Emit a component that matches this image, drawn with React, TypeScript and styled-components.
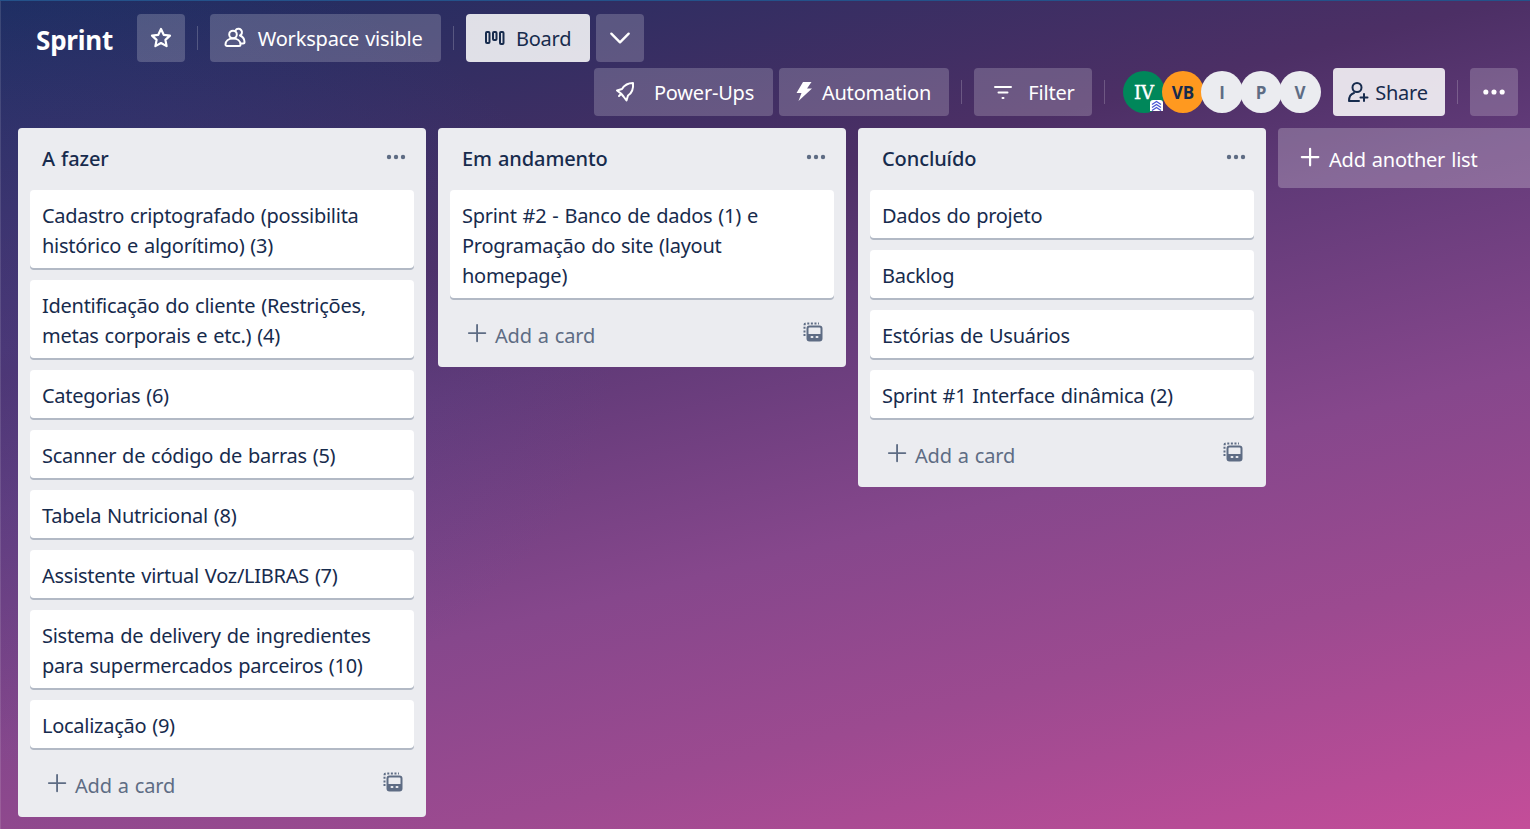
import styled, { createGlobalStyle } from "styled-components";
import type { ReactNode } from "react";

const GlobalStyle = createGlobalStyle`
  html, body {
    margin: 0;
    height: 100%;
    overflow: hidden;
  }

  body {
    font-family: "Noto Sans", "Open Sans", sans-serif;
    color: #172b4d;
  }
`;

const Page = styled.div`
  box-sizing: border-box;
  width: 1530px;
  height: 829px;
  overflow: hidden;
  border-top: 1px solid #24528a;
  box-shadow: inset 1px 0 0 rgba(255, 255, 255, 0.12);
  background:
    radial-gradient(ellipse 620px 420px at 0 42%, rgba(80, 84, 180, 0.24), transparent),
    linear-gradient(166deg, #1c2d60 0%, #4c2f65 31%, #613a78 42%, #86478c 62%, #9c4a90 78%, #c44d99 100%);
`;

const Header = styled.header`
  display: flex;
  flex-direction: column;
  gap: 6px;
  padding: 13px 12px 0 36px;
`;

const HeaderRow = styled.div<{ $end?: boolean }>`
  display: flex;
  align-items: center;
  height: 48px;
  justify-content: ${(p) => (p.$end ? "flex-end" : "flex-start")};
`;

const BoardTitle = styled.h1`
  margin: 3px 24px 0 0;
  font-size: 26px;
  font-weight: 700;
  color: #fff;
  letter-spacing: -0.2px;
`;

const HeaderButton = styled.button<{
  $light?: boolean;
  $width: number;
  $gap?: number;
  $first?: boolean;
  $trim?: number;
}>`
  display: flex;
  flex: none;
  align-items: center;
  justify-content: center;
  gap: ${(p) => p.$gap ?? 10}px;
  box-sizing: border-box;
  width: ${(p) => p.$width}px;
  height: 48px;
  margin-left: ${(p) => (p.$first ? 0 : 6)}px;
  padding: 0 ${(p) => p.$trim ?? 0}px 0 0;
  border: 0;
  border-radius: 4px;
  font-family: inherit;
  font-size: 20px;
  letter-spacing: -0.2px;
  word-spacing: 1px;
  color: ${(p) => (p.$light ? "#172b4d" : "#fff")};
  background: ${(p) => (p.$light ? "rgba(255, 255, 255, 0.85)" : "rgba(255, 255, 255, 0.2)")};
  svg {
    flex: none;
  }
`;

const ButtonLabel = styled.span`
  padding-top: 1px;
`;

const AddListLabel = styled.span`
  padding-top: 3px;
`;

const Separator = styled.span`
  flex: none;
  width: 1px;
  height: 24px;
  margin: 0 6px 0 12px;
  background: rgba(255, 255, 255, 0.2);
`;

const Avatars = styled.div`
  display: flex;
  margin: 0 6px 0 12px;
`;

const Avatar = styled.div<{ $bg: string; $color: string; $serif?: boolean }>`
  position: relative;
  display: flex;
  align-items: center;
  justify-content: center;
  width: 42px;
  height: 42px;
  margin-right: -3px;
  border-radius: 50%;
  font-family: ${(p) => (p.$serif ? '"DejaVu Serif", serif' : '"Open Sans", sans-serif')};
  font-size: ${(p) => (p.$serif ? 18 : 17)}px;
  font-weight: ${(p) => (p.$serif ? 400 : 700)};
  -webkit-text-stroke: ${(p) => (p.$serif ? "0.4px" : "0")};
  color: ${(p) => p.$color};
  background: ${(p) => p.$bg};
  &:last-child {
    margin-right: 0;
  }
`;

const AdminBadge = styled.span`
  position: absolute;
  right: 2px;
  bottom: 2px;
  display: flex;
  width: 13px;
  height: 11px;
  border-radius: 3px 3px 0 0;
  background: #fff;
`;

const Board = styled.main`
  display: flex;
  align-items: flex-start;
  gap: 12px;
  padding: 12px 0 0 18px;
`;

const List = styled.section`
  flex: none;
  width: 408px;
  box-sizing: border-box;
  padding: 0 12px 8px;
  border-radius: 4px;
  background: #ebecf0;
`;

const ListHeader = styled.div`
  display: flex;
  align-items: center;
  justify-content: space-between;
  height: 62px;
  padding: 0 6px 0 12px;
  box-sizing: border-box;
`;

const ListTitle = styled.h2`
  margin: 0 0 1px;
  font-size: 20px;
  font-weight: 500;
  letter-spacing: -0.1px;
  word-spacing: 1px;
  color: #172b4d;
`;

const ListMenu = styled.span`
  display: flex;
  margin-bottom: 4px;
  color: #5e6c84;
`;

const Cards = styled.div`
  display: flex;
  flex-direction: column;
  gap: 12px;
`;

const Card = styled.div`
  padding: 11px 12px 7px;
  border-radius: 4px;
  background: #fff;
  box-shadow: 0 2px 0 rgba(9, 30, 66, 0.25);
  font-size: 20px;
  line-height: 30px;
  letter-spacing: -0.27px;
  word-spacing: 1px;
  color: #172b4d;
`;

const ListFooter = styled.div`
  display: flex;
  align-items: center;
  justify-content: space-between;
  height: 48px;
  margin-top: 13px;
  padding: 0 11px 0 17px;
  font-size: 20px;
  letter-spacing: -0.2px;
  word-spacing: 1px;
  color: #5e6c84;
`;

const AddCard = styled.div`
  display: flex;
  align-items: center;
  gap: 6px;
  svg {
    margin-top: -3px;
  }
`;

const TemplateGlyph = styled.svg`
  margin-top: -6px;
`;

const AddList = styled.div`
  flex: none;
  display: flex;
  align-items: center;
  gap: 7px;
  width: 300px;
  height: 60px;
  box-sizing: border-box;
  padding: 0 0 0 22px;
  border-radius: 4px 0 0 4px;
  background: rgba(255, 255, 255, 0.24);
  color: #fff;
  font-size: 20px;
  letter-spacing: -0.2px;
  word-spacing: 1px;
`;

const Icon = ({ size = 24, stroke = 2, children }: { size?: number; stroke?: number; children: ReactNode }) => (
  <svg
    width={size}
    height={size}
    viewBox="0 0 24 24"
    fill="none"
    stroke="currentColor"
    strokeWidth={stroke}
    strokeLinecap="round"
    strokeLinejoin="round"
  >
    {children}
  </svg>
);

const Dots = ({ size = 24 }: { size?: number }) => (
  <svg width={size} height={size} viewBox="0 0 24 24" fill="currentColor">
    <circle cx="5" cy="12" r="2.2" />
    <circle cx="12" cy="12" r="2.2" />
    <circle cx="19" cy="12" r="2.2" />
  </svg>
);

const Plus = ({ stroke = 2 }: { stroke?: number }) => (
  <Icon size={22} stroke={stroke}>
    <path d="M11 2v18M2 11h18" />
  </Icon>
);

const TemplateIcon = () => (
  <TemplateGlyph width="20" height="20" viewBox="0 0 20 20" fill="none">
    <path d="M1.500 14V3a1.500 1.500 0 0 1 1.500-1.500h13" stroke="#5e6c84" strokeWidth="2" strokeDasharray="2 1.600" />
    <rect x="4.500" y="4.500" width="14" height="14" rx="2" stroke="#5e6c84" strokeWidth="2" />
    <rect x="5" y="12" width="13" height="6" fill="#5e6c84" />
    <rect x="7.500" y="14" width="3" height="2" rx="1" fill="#ebecf0" />
    <rect x="12.500" y="14" width="3" height="2" rx="1" fill="#ebecf0" />
  </TemplateGlyph>
);

const lists = [
  {
    title: "A fazer",
    cards: [
      "Cadastro criptografado (possibilita histórico e algorítimo) (3)",
      "Identificação do cliente (Restrições, metas corporais e etc.) (4)",
      "Categorias (6)",
      "Scanner de código de barras (5)",
      "Tabela Nutricional (8)",
      "Assistente virtual Voz/LIBRAS (7)",
      "Sistema de delivery de ingredientes para supermercados parceiros (10)",
      "Localização (9)",
    ],
  },
  {
    title: "Em andamento",
    cards: ["Sprint #2 - Banco de dados (1) e Programação do site (layout homepage)"],
  },
  {
    title: "Concluído",
    cards: ["Dados do projeto", "Backlog", "Estórias de Usuários", "Sprint #1 Interface dinâmica (2)"],
  },
];

export default function App() {
  return (
    <Page>
      <GlobalStyle />
      <Header>
        <HeaderRow>
          <BoardTitle>Sprint</BoardTitle>
          <HeaderButton $width={48} $first>
            <Icon size={24} stroke={2.2}>
              <path d="M12 3l2.700 5.800 6.300.8-4.600 4.300 1.200 6.200L12 17l-5.600 3.100 1.200-6.200L3 9.600l6.300-.8z" />
            </Icon>
          </HeaderButton>
          <Separator />
          <HeaderButton $width={231} $gap={11} $trim={6}>
            <Icon size={24} stroke={2}>
              <circle cx="10" cy="8.500" r="3.800" />
              <path d="M12.500 4.500a3.500 3.500 0 1 1 4.500 5c2.500 1 4.500 3.500 4.500 6.500 0 1-.8 1.500-1.500 1.500h-1.500" />
              <path d="M2.500 18.500c0-3.500 3-6 7.500-6s7.500 2.500 7.500 6c0 1-.8 1.500-1.500 1.500H4c-.8 0-1.500-.5-1.500-1.500z" />
            </Icon>
            <ButtonLabel>Workspace visible</ButtonLabel>
          </HeaderButton>
          <Separator />
          <HeaderButton $width={124} $light $gap={11}>
            <svg width="20" height="14" viewBox="0 0 20 14" fill="none" stroke="#172b4d" strokeWidth="2">
              <rect x="1" y="1" width="3.500" height="11" rx="1" />
              <rect x="8" y="1" width="3.500" height="8" rx="1" />
              <rect x="15" y="1" width="3.500" height="12" rx="1" />
            </svg>
            <ButtonLabel>Board</ButtonLabel>
          </HeaderButton>
          <HeaderButton $width={48}>
            <Icon size={26} stroke={2.2}>
              <path d="M4 8l8 8 8-8" />
            </Icon>
          </HeaderButton>
        </HeaderRow>
        <HeaderRow $end>
          <HeaderButton $width={179} $gap={17}>
            <Icon size={24} stroke={2}>
              <path d="M20 3c-5 0-8.500 2-11 6l-5 1.500 4 3 2.500 3 3 4 1.500-5c4-2.500 5.500-7.500 5-12.500z" />
              <path d="M8 14l-2 2" />
            </Icon>
            <ButtonLabel>Power-Ups</ButtonLabel>
          </HeaderButton>
          <HeaderButton $width={170} $gap={8} $trim={3}>
            <svg width="20" height="24" viewBox="0 0 20 24" fill="#fff">
              <path d="M9 2h8.500l-4.500 6.500h5L4.500 21 7.500 13H2.500z" />
            </svg>
            <ButtonLabel>Automation</ButtonLabel>
          </HeaderButton>
          <Separator />
          <HeaderButton $width={118} $gap={13}>
            <Icon size={24} stroke={2}>
              <path d="M4 7h16M7.500 12.500h9M11.500 18h1" />
            </Icon>
            <ButtonLabel>Filter</ButtonLabel>
          </HeaderButton>
          <Separator />
          <Avatars>
            <Avatar $bg="#00875a" $color="#fff" $serif>
              IV
              <AdminBadge>
                <svg width="13" height="11" viewBox="0 0 13 11" fill="none" stroke="#4a55d4" strokeWidth="1.300">
                  <path d="M2 4.500l4.500-3 4.500 3M2 7.500l4.500-3 4.500 3M2 10.500l4.500-3 4.500 3" />
                </svg>
              </AdminBadge>
            </Avatar>
            <Avatar $bg="#ff991f" $color="#172b4d">VB</Avatar>
            <Avatar $bg="#ebecf0" $color="#5e6c84">I</Avatar>
            <Avatar $bg="#ebecf0" $color="#5e6c84">P</Avatar>
            <Avatar $bg="#ebecf0" $color="#5e6c84">V</Avatar>
          </Avatars>
          <HeaderButton $width={112} $light $gap={5} $trim={4}>
            <Icon size={24} stroke={2}>
              <circle cx="11" cy="7.500" r="4.500" />
              <path d="M3 21c0-4 1.500-7 5-8M3 21h10M18 14v7M14.500 17.500h7" />
            </Icon>
            <ButtonLabel>Share</ButtonLabel>
          </HeaderButton>
          <Separator />
          <HeaderButton $width={48}>
            <Dots size={28} />
          </HeaderButton>
        </HeaderRow>
      </Header>
      <Board>
        {lists.map((list) => (
          <List key={list.title}>
            <ListHeader>
              <ListTitle>{list.title}</ListTitle>
              <ListMenu>
                <Dots size={24} />
              </ListMenu>
            </ListHeader>
            <Cards>
              {list.cards.map((card) => (
                <Card key={card}>{card}</Card>
              ))}
            </Cards>
            <ListFooter>
              <AddCard>
                <Plus />
                Add a card
              </AddCard>
              <TemplateIcon />
            </ListFooter>
          </List>
        ))}
        <AddList>
          <Plus stroke={2.4} />
          <AddListLabel>Add another list</AddListLabel>
        </AddList>
      </Board>
    </Page>
  );
}
